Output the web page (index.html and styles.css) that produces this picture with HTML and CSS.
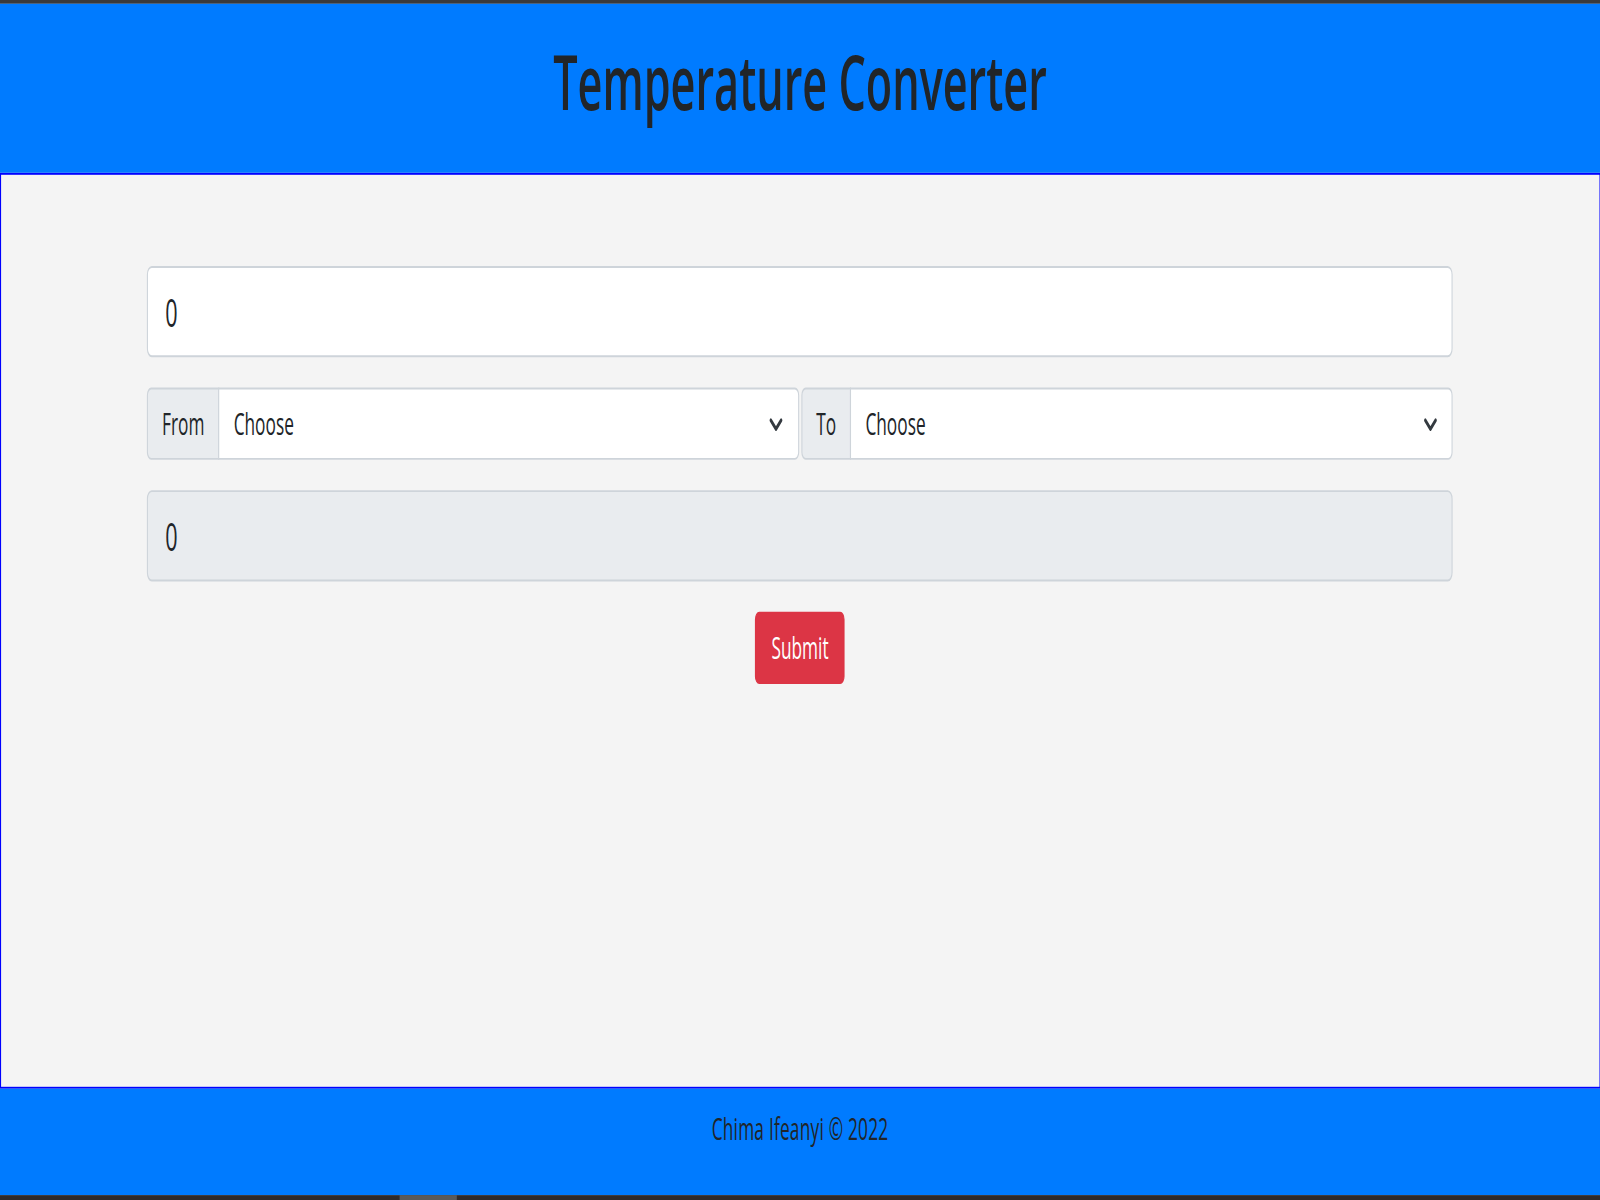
FILE: index.html
```html
<!DOCTYPE html>
<html lang="en">
<head>
<meta charset="utf-8">
<title>Temperature Converter</title>
<link rel="stylesheet" href="styles.css">
</head>
<body>
<div class="page">
  <div class="topbar"></div>
  <header class="site-header">
    <h1 class="title">Temperature Converter</h1>
  </header>
  <main class="main">
    <div class="container">
      <form class="converter">
        <input class="field field-lg" type="text" value="0">
        <div class="selects">
          <div class="group">
            <span class="addon">From</span>
            <div class="select-wrap">
              <select class="select"><option>Choose</option><option>Celsius</option><option>Fahrenheit</option><option>Kelvin</option></select>
              <svg class="chevron" viewBox="0 0 13 7" aria-hidden="true"><polyline points="1.7,1.2 6.5,5.8 11.3,1.2" fill="none" stroke="#343a40" stroke-width="2.1" stroke-linecap="round" stroke-linejoin="round"/></svg>
            </div>
          </div>
          <div class="group">
            <span class="addon">To</span>
            <div class="select-wrap">
              <select class="select"><option>Choose</option><option>Celsius</option><option>Fahrenheit</option><option>Kelvin</option></select>
              <svg class="chevron" viewBox="0 0 13 7" aria-hidden="true"><polyline points="1.7,1.2 6.5,5.8 11.3,1.2" fill="none" stroke="#343a40" stroke-width="2.1" stroke-linecap="round" stroke-linejoin="round"/></svg>
            </div>
          </div>
        </div>
        <input class="field field-lg field-readonly" type="text" value="0" readonly>
        <div class="actions">
          <button class="btn-submit" type="button">Submit</button>
        </div>
      </form>
    </div>
  </main>
  <footer class="site-footer">
    <p class="credit">Chima Ifeanyi © 2022</p>
  </footer>
  <div class="bottombar"><span class="task"></span></div>
</div>
</body>
</html>
```
FILE: styles.css
```css
html, body {
  margin: 0;
  padding: 0;
  background: #f4f4f4;
  overflow: hidden;
}

body {
  width: 1600px;
  height: 1200px;
}

.page {
  width: 1481.5px;
  height: 631.58px;
  transform: scale(1.08, 1.9);
  transform-origin: 0 0;
  display: flex;
  flex-direction: column;
  font-family: "Open Sans", "Noto Sans", "Liberation Sans", sans-serif;
  font-size: 16px;
  line-height: 1.5;
  color: #212529;
}

.topbar {
  flex: none;
  height: 1.74px;
  background: #3a3a3a;
}

.site-header {
  flex: none;
  background: #007bff;
  padding: 17.5px 16px 16.5px;
  text-align: center;
}

.title {
  margin: 0 0 7px;
  font-size: 40px;
  font-weight: 600;
  line-height: 48px;
  color: #212529;
}

.main {
  flex: 1;
  min-height: 0;
  border: 1px solid #0000ff;
  background: #f4f4f4;
  padding-top: 48px;
}

.container {
  width: 1209.3px;
  margin: 0 auto;
}

.converter {
  margin: 0;
}

.field {
  display: block;
  width: 100%;
  box-sizing: border-box;
  height: 48px;
  margin: 0 0 16px;
  padding: 9px 16px 7px;
  font-family: inherit;
  font-size: 20px;
  line-height: 1.5;
  color: #212529;
  background: #fff;
  border: 1px solid #ced4da;
  border-radius: 4.5px;
  outline: none;
}

.field-readonly {
  background: #e9ecef;
}

.selects {
  display: flex;
  gap: 2.2px;
  margin-bottom: 16px;
}

.group {
  flex: 1;
  display: flex;
  height: 38px;
}

.addon {
  flex: none;
  display: flex;
  align-items: center;
  padding: 1.5px 13px 0;
  background: #e9ecef;
  border: 1px solid #ced4da;
  border-radius: 4px 0 0 4px;
  color: #212529;
}

.select-wrap {
  flex: 1;
  position: relative;
  margin-left: -1px;
}

.select {
  appearance: none;
  -webkit-appearance: none;
  display: block;
  width: 100%;
  height: 100%;
  box-sizing: border-box;
  padding: 1.5px 36px 0 13px;
  font-family: inherit;
  font-size: 16px;
  color: #212529;
  background: #fff;
  border: 1px solid #ced4da;
  border-radius: 0 4px 4px 0;
  outline: none;
}

.chevron {
  position: absolute;
  right: 14.2px;
  top: 50%;
  width: 13px;
  height: 7px;
  margin-top: -3px;
  pointer-events: none;
}

.actions {
  display: flex;
  justify-content: center;
}

.btn-submit {
  height: 38px;
  padding: 1.5px 14px 0;
  font-family: inherit;
  font-size: 16px;
  color: #fff;
  background: #dc3545;
  border: 1px solid #dc3545;
  border-radius: 4px;
}

.site-footer {
  flex: none;
  background: #007bff;
  padding: 9px 8px 7px;
  text-align: center;
}

.credit {
  margin: 0 0 16px;
  letter-spacing: 0.2px;
  color: #212529;
}

.bottombar {
  flex: none;
  height: 2.6px;
  background: #2f2a2a;
  display: flex;
}

.task {
  width: 53px;
  margin-left: 370px;
  background: #5a5a5a;
}
```
